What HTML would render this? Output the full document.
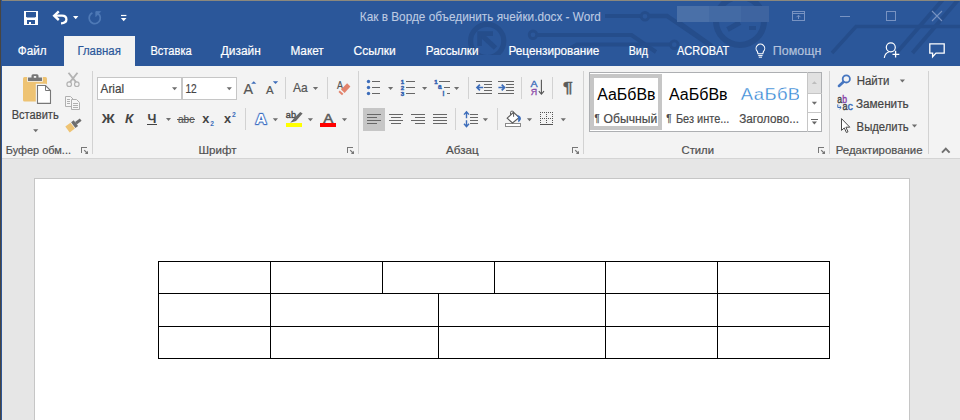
<!DOCTYPE html>
<html><head><meta charset="utf-8">
<style>
*{box-sizing:border-box;margin:0;padding:0}
html,body{width:960px;height:420px;overflow:hidden;background:#e6e6e6}
body{font-family:"Liberation Sans",sans-serif;position:relative}
.abs{position:absolute}
#title{left:0;top:0;width:960px;height:66px;background:#2b579a}
#hometab{left:64px;top:36px;width:71px;height:31px;background:#f3f3f3}
#ribbon{left:0;top:66px;width:960px;height:93px;background:#f3f3f3;border-bottom:1px solid #d4d4d4}
#page{left:34px;top:178px;width:876px;height:260px;background:#fff;border:1px solid #c6c6c6}
svg{position:absolute;left:0;top:0}
svg text{font-family:"Liberation Sans",sans-serif;white-space:pre}
</style></head><body>
<div class="abs" id="title"></div>
<div class="abs" id="hometab"></div>
<div class="abs" id="ribbon"></div>
<div class="abs" id="page"></div>
<svg width="960" height="420" viewBox="0 0 960 420">
<clipPath id="cp"><rect x="0" y="1" width="960" height="54"/></clipPath>
<g fill="none" stroke="#254d8b" stroke-width="3.4" clip-path="url(#cp)">
<circle cx="487.2" cy="41" r="16.6" stroke-width="5.2"/>
<path d="M481.5 35.2 L495.5 48" fill="none" stroke="#254d8b" stroke-width="5" />
<path d="M479.6 46 V33.6 H493" fill="none" stroke="#254d8b" stroke-width="4.6" />
<circle cx="533" cy="34.8" r="3.8" stroke-width="2.8"/>
<path d="M537 35 H631.5 L656 52" fill="none" stroke="#254d8b" stroke-width="4" />
<path d="M564 52 L577 44.6 H670.4" fill="none" stroke="#254d8b" stroke-width="4" />
<circle cx="674.3" cy="44.7" r="3.8" stroke-width="2.8"/>
<path d="M605 16 H641" fill="none" stroke="#254d8b" stroke-width="4" />
<circle cx="645" cy="16.3" r="3.8" stroke-width="2.8"/>
<path d="M649 16 H667 L708 44" fill="none" stroke="#254d8b" stroke-width="4.4" />
<path d="M677 21 L712 46" fill="none" stroke="#254d8b" stroke-width="4" />
<circle cx="740" cy="21" r="24" stroke-width="6"/>
<path d="M727.5 29.5 L740 22.5" fill="none" stroke="#254d8b" stroke-width="5" />
<path d="M749 28 h7" fill="none" stroke="#254d8b" stroke-width="4" />
<path d="M832 53 L856 26.5 H960" fill="none" stroke="#254d8b" stroke-width="3.6" />
<path d="M896.5 53 L942.5 0" fill="none" stroke="#254d8b" stroke-width="4" />
<path d="M912.5 53 L958 0" fill="none" stroke="#254d8b" stroke-width="4" />
</g>
<g shape-rendering="crispEdges">
<rect x="0" y="0" width="1" height="420" fill="#474542" />
<rect x="1" y="0" width="1" height="420" fill="#2c5596" />
<rect x="2" y="0" width="958" height="1" fill="#8b887d" />
</g>
<g shape-rendering="crispEdges">
<rect x="24" y="11" width="14" height="14" fill="#fff" />
<path d="M26 12h10v4.5l-1 1h-8l-1 -1z" fill="#2b579a" stroke="none" stroke-width="1" shape-rendering="geometricPrecision"/>
<rect x="27" y="20" width="8" height="4" fill="#2b579a" />
<rect x="29" y="22" width="2" height="2" fill="#fff" />
</g>
<path d="M58.8 11.4 L54.2 15.7 L58.8 20" fill="none" stroke="#fff" stroke-width="2.4" stroke-linejoin="miter"/>
<path d="M55 15.7 H62 C65.2 15.7 66.4 17.8 66.4 19.6 C66.4 22 64.2 23.2 61 23.4" fill="none" stroke="#fff" stroke-width="2.3" />
<path d="M73 16h5.4l-2.7 3.2z" fill="#fff" stroke="none" stroke-width="1" />
<path d="M92.4 12.9 A5.6 5.6 0 1 0 99.7 15.4 L96.2 12" fill="none" stroke="#4e79b6" stroke-width="1.8" />
<path d="M95.8 16.6 V11.6 H100.6 Z" fill="#4e79b6" stroke="#4e79b6" stroke-width="0.8" />
<rect x="121" y="14.9" width="5.4" height="1.2" fill="#fff" />
<path d="M120.9 18h5.6l-2.8 3.2z" fill="#fff" stroke="none" stroke-width="1" />
<text x="359.8" y="21.3" font-size="12.1" fill="#becbe2" textLength="241.0" lengthAdjust="spacingAndGlyphs" stroke="#becbe2" stroke-width="0.1" >Как в Ворде объединить ячейки.docx - Word</text>
<g shape-rendering="crispEdges">
<rect x="677" y="6" width="32" height="16" fill="#4a70a8" />
<rect x="709" y="6" width="32" height="16" fill="#436aa4" />
<rect x="741" y="6" width="28" height="16" fill="#3e64a0" />
</g>
<g shape-rendering="crispEdges" fill="none" stroke="#7893c2">
<rect x="792.5" y="11.5" width="12" height="9"/>
<line x1="793" y1="13.5" x2="804" y2="13.5"/>
</g>
<path d="M798.5 19 V15.5 M796.5 17.2 L798.5 15.2 L800.5 17.2" fill="none" stroke="#7893c2" stroke-width="1" />
<g shape-rendering="crispEdges">
<rect x="840" y="16" width="10" height="1" fill="#7893c2" />
<rect x="886.5" y="11.5" width="9" height="9" fill="none" stroke="#7893c2"/>
</g>
<path d="M932 11 L942 21 M942 11 L932 21" fill="none" stroke="#7893c2" stroke-width="1.1" />
<text x="17.8" y="55" font-size="12.5" fill="#fff" textLength="28.8" lengthAdjust="spacingAndGlyphs" stroke="#fff" stroke-width="0.2" >Файл</text>
<text x="77.4" y="55" font-size="12.5" fill="#2b579a" textLength="43.5" lengthAdjust="spacingAndGlyphs" stroke="#2b579a" stroke-width="0.2" >Главная</text>
<text x="150.4" y="55" font-size="12.5" fill="#fff" textLength="41.3" lengthAdjust="spacingAndGlyphs" stroke="#fff" stroke-width="0.2" >Вставка</text>
<text x="220.8" y="55" font-size="12.5" fill="#fff" textLength="40.0" lengthAdjust="spacingAndGlyphs" stroke="#fff" stroke-width="0.2" >Дизайн</text>
<text x="290.4" y="55" font-size="12.5" fill="#fff" textLength="33.4" lengthAdjust="spacingAndGlyphs" stroke="#fff" stroke-width="0.2" >Макет</text>
<text x="353.5" y="55" font-size="12.5" fill="#fff" textLength="42.3" lengthAdjust="spacingAndGlyphs" stroke="#fff" stroke-width="0.2" >Ссылки</text>
<text x="425.8" y="55" font-size="12.5" fill="#fff" textLength="52.7" lengthAdjust="spacingAndGlyphs" stroke="#fff" stroke-width="0.2" >Рассылки</text>
<text x="508.5" y="55" font-size="12.5" fill="#fff" textLength="90.8" lengthAdjust="spacingAndGlyphs" stroke="#fff" stroke-width="0.2" >Рецензирование</text>
<text x="628.7" y="55" font-size="12.5" fill="#fff" textLength="19.3" lengthAdjust="spacingAndGlyphs" stroke="#fff" stroke-width="0.2" >Вид</text>
<text x="677" y="55" font-size="12.5" fill="#fff" textLength="52.3" lengthAdjust="spacingAndGlyphs" stroke="#fff" stroke-width="0.2" >ACROBAT</text>
<text x="772.8" y="55" font-size="12.5" fill="#b4c2dc" textLength="48.5" lengthAdjust="spacingAndGlyphs" stroke="#b4c2dc" stroke-width="0.2" >Помощн</text>
<path d="M757.3 51.4 A4.3 4.3 0 1 1 763.5 51.4 L762.8 53.8 H758 Z" fill="none" stroke="#fff" stroke-width="1.1" />
<path d="M758.2 55.6 H762.6 M758.8 57.2 H762" fill="none" stroke="#fff" stroke-width="1" />
<circle cx="890.8" cy="47.3" r="4.5" fill="none" stroke="#fff" stroke-width="1.2"/>
<path d="M884.3 57.8 C884.8 54.4 886.6 52.6 889.2 51.8" fill="none" stroke="#fff" stroke-width="1.2" />
<path d="M892.5 54.3 H899.3 M895.6 50.8 V57.6" fill="none" stroke="#fff" stroke-width="1.3" />
<path d="M929.8 43.9 H944.2 V53.1 H936 L932.6 56.8 V53.1 H929.8 Z" fill="none" stroke="#fff" stroke-width="1.3" />
<g shape-rendering="crispEdges">
<rect x="92" y="71" width="1" height="83" fill="#d2d2d2" />
<rect x="358" y="71" width="1" height="83" fill="#d2d2d2" />
<rect x="583" y="71" width="1" height="83" fill="#d2d2d2" />
<rect x="829" y="71" width="1" height="83" fill="#d2d2d2" />
<rect x="928" y="71" width="1" height="83" fill="#d2d2d2" />
<rect x="285" y="77" width="1" height="22" fill="#d2d2d2" />
<rect x="327" y="77" width="1" height="22" fill="#d2d2d2" />
<rect x="468" y="77" width="1" height="22" fill="#d2d2d2" />
<rect x="521" y="77" width="1" height="22" fill="#d2d2d2" />
<rect x="552" y="77" width="1" height="22" fill="#d2d2d2" />
<rect x="245" y="108" width="1" height="22" fill="#d2d2d2" />
<rect x="455" y="108" width="1" height="22" fill="#d2d2d2" />
<rect x="497" y="108" width="1" height="22" fill="#d2d2d2" />
</g>
<g shape-rendering="crispEdges" fill="#777">
<rect x="81" y="147" width="6" height="1" fill="#777" />
<rect x="81" y="147" width="1" height="6" fill="#777" />
</g>
<path d="M84.2 150.2 L87 153" fill="none" stroke="#777" stroke-width="1.2" />
<path d="M88 150.8 V154 H84.8 Z" fill="#777" stroke="none" stroke-width="1" />
<g shape-rendering="crispEdges" fill="#777">
<rect x="347" y="147" width="6" height="1" fill="#777" />
<rect x="347" y="147" width="1" height="6" fill="#777" />
</g>
<path d="M350.2 150.2 L353 153" fill="none" stroke="#777" stroke-width="1.2" />
<path d="M354 150.8 V154 H350.8 Z" fill="#777" stroke="none" stroke-width="1" />
<g shape-rendering="crispEdges" fill="#777">
<rect x="572" y="147" width="6" height="1" fill="#777" />
<rect x="572" y="147" width="1" height="6" fill="#777" />
</g>
<path d="M575.2 150.2 L578 153" fill="none" stroke="#777" stroke-width="1.2" />
<path d="M579 150.8 V154 H575.8 Z" fill="#777" stroke="none" stroke-width="1" />
<g shape-rendering="crispEdges" fill="#777">
<rect x="818" y="147" width="6" height="1" fill="#777" />
<rect x="818" y="147" width="1" height="6" fill="#777" />
</g>
<path d="M821.2 150.2 L824 153" fill="none" stroke="#777" stroke-width="1.2" />
<path d="M825 150.8 V154 H821.8 Z" fill="#777" stroke="none" stroke-width="1" />
<text x="5.7" y="154" font-size="11.3" fill="#505050" textLength="65.3" lengthAdjust="spacingAndGlyphs" stroke="#505050" stroke-width="0.2" >Буфер обм...</text>
<text x="198.5" y="154" font-size="11.3" fill="#505050" textLength="38.0" lengthAdjust="spacingAndGlyphs" stroke="#505050" stroke-width="0.2" >Шрифт</text>
<text x="446" y="154" font-size="11.3" fill="#505050" textLength="32.6" lengthAdjust="spacingAndGlyphs" stroke="#505050" stroke-width="0.2" >Абзац</text>
<text x="681.5" y="154" font-size="11.3" fill="#505050" textLength="32.5" lengthAdjust="spacingAndGlyphs" stroke="#505050" stroke-width="0.2" >Стили</text>
<text x="835.7" y="154" font-size="11.3" fill="#505050" textLength="86.9" lengthAdjust="spacingAndGlyphs" stroke="#505050" stroke-width="0.2" >Редактирование</text>
<path d="M942 152.6 L945.8 148.6 L949.6 152.6" fill="none" stroke="#707070" stroke-width="2" />
<path d="M24.5 77 H45.5 Q47 77 47 78.5 V100 Q47 101.6 45.5 101.6 H24.5 Q23 101.6 23 100 V78.5 Q23 77 24.5 77Z" fill="#eec373" stroke="none" stroke-width="1" />
<path d="M28 81 V77.6 H31.5 V75.8 Q31.5 74.2 33 74.2 H37 Q38.5 74.2 38.5 75.8 V77.6 H42 V81 Z" fill="#777" stroke="#f3f3f3" stroke-width="1.6" paint-order="stroke"/>
<rect x="33.8" y="76" width="2.4" height="1.8" fill="#f3f3f3" />
<path d="M37.5 85.5 H45.5 L50.5 90.5 V103.4 H37.5 Z" fill="none" stroke="#f3f3f3" stroke-width="3.4" />
<path d="M37.5 85.5 H45.5 L50.5 90.5 V103.4 H37.5 Z" fill="#fff" stroke="#777" stroke-width="1.1" />
<path d="M45.5 85.5 V90.5 H50.5" fill="none" stroke="#777" stroke-width="1" />
<text x="11.7" y="118.9" font-size="12.5" fill="#444" textLength="47.0" lengthAdjust="spacingAndGlyphs" stroke="#444" stroke-width="0.2" >Вставить</text>
<path d="M33.1 129.2h5.2l-2.6 3z" fill="#6e6e6e" stroke="none" stroke-width="1" />
<path d="M68.5 72.8 L76.2 82.4 M77.5 72.8 L69.8 82.4" fill="none" stroke="#b3b3b3" stroke-width="1.8" />
<circle cx="69.2" cy="84.2" r="2.3" fill="none" stroke="#b3b3b3" stroke-width="1.2"/>
<circle cx="76.8" cy="84.2" r="2.3" fill="none" stroke="#b3b3b3" stroke-width="1.2"/>
<path d="M65.5 96.5 H70.5 L73 99 V106.5 H65.5 Z" fill="#f6f6f6" stroke="#b0b0b0" stroke-width="1" />
<path d="M71.5 99.5 H76.5 L79.5 102.5 V109.5 H71.5 Z" fill="#f6f6f6" stroke="#b0b0b0" stroke-width="1" />
<g shape-rendering="crispEdges" fill="#b0b0b0">
<rect x="67" y="99" width="3" height="1" fill="#b0b0b0" />
<rect x="67" y="101" width="3" height="1" fill="#b0b0b0" />
<rect x="67" y="103" width="3" height="1" fill="#b0b0b0" />
<rect x="73" y="103" width="5" height="1" fill="#b0b0b0" />
<rect x="73" y="105" width="5" height="1" fill="#b0b0b0" />
<rect x="73" y="107" width="5" height="1" fill="#b0b0b0" />
</g>
<path d="M65.3 126.6 L70.5 122.7 L74.9 128.5 L69.7 132.4 Z" fill="#eec373" stroke="none" stroke-width="1" />
<path d="M71.1 122.3 L73.7 120.3 L78.1 126.1 L75.4 128.1 Z" fill="#6e6e6e" stroke="none" stroke-width="1" />
<path d="M75 122 L79.8 118.4 L81.6 120.8 L76.8 124.4 Z" fill="#6e6e6e" stroke="none" stroke-width="1" />
<g shape-rendering="crispEdges">
<rect x="97.5" y="77.5" width="84" height="22" fill="#fff" stroke="#c6c6c6"/>
<rect x="182.5" y="77.5" width="54" height="22" fill="#fff" stroke="#c6c6c6"/>
</g>
<text x="100.6" y="93" font-size="12.6" fill="#444" textLength="23.4" lengthAdjust="spacingAndGlyphs" stroke="#444" stroke-width="0.2" >Arial</text>
<path d="M172 87.3h5.2l-2.6 3z" fill="#6e6e6e" stroke="none" stroke-width="1" />
<text x="185.4" y="93" font-size="12.6" fill="#444" textLength="11.3" lengthAdjust="spacingAndGlyphs" stroke="#444" stroke-width="0.2" >12</text>
<path d="M226.7 87.3h5.2l-2.6 3z" fill="#6e6e6e" stroke="none" stroke-width="1" />
<text x="101.7" y="123" font-size="12.4" fill="#444" textLength="13.0" lengthAdjust="spacingAndGlyphs" font-weight="bold" >Ж</text>
<text x="125.1" y="123" font-size="12.4" fill="#444" textLength="8.3" lengthAdjust="spacingAndGlyphs" font-weight="bold" font-style="italic" >К</text>
<text x="147.5" y="123" font-size="12.4" fill="#444" textLength="8.9" lengthAdjust="spacingAndGlyphs" font-weight="bold" >Ч</text>
<g shape-rendering="crispEdges">
<rect x="147" y="124" width="10" height="1" fill="#444" />
</g>
<path d="M166 118h5l-2.5 3z" fill="#6e6e6e" stroke="none" stroke-width="1" />
<text x="178" y="123" font-size="11.5" fill="#555" textLength="16.3" lengthAdjust="spacingAndGlyphs" stroke="#555" stroke-width="0.2" >abc</text>
<g shape-rendering="crispEdges">
<rect x="177" y="119" width="18" height="1" fill="#555" />
</g>
<text x="202.2" y="123" font-size="13.5" fill="#444" textLength="7.1" lengthAdjust="spacingAndGlyphs" font-weight="bold" >x</text>
<text x="210.2" y="125.5" font-size="6.5" fill="#3d6dba" textLength="3.7" lengthAdjust="spacingAndGlyphs" font-weight="bold" >2</text>
<text x="224" y="123" font-size="13.5" fill="#444" textLength="7.1" lengthAdjust="spacingAndGlyphs" font-weight="bold" >x</text>
<text x="232" y="117" font-size="6.5" fill="#3d6dba" textLength="3.8" lengthAdjust="spacingAndGlyphs" font-weight="bold" >2</text>
<text x="243.4" y="94.1" font-size="14" fill="#555" textLength="9.5" lengthAdjust="spacingAndGlyphs" stroke="#555" stroke-width="0.2" >A</text>
<path d="M251.2 83.8 L253.75 81.2 L256.3 83.8 Z" fill="#3d6dba" stroke="none" stroke-width="1" />
<text x="266" y="94.1" font-size="11.3" fill="#555" textLength="7.6" lengthAdjust="spacingAndGlyphs" stroke="#555" stroke-width="0.2" >A</text>
<path d="M272.8 81.2 H278.2 L275.5 83.9 Z" fill="#3d6dba" stroke="none" stroke-width="1" />
<text x="293.1" y="91.7" font-size="12.2" fill="#555" textLength="14.7" lengthAdjust="spacingAndGlyphs" stroke="#555" stroke-width="0.2" >Aa</text>
<path d="M312.9 87h5.2l-2.6 3z" fill="#6e6e6e" stroke="none" stroke-width="1" />
<text x="336.9" y="88.9" font-size="11" fill="#555" textLength="6.0" lengthAdjust="spacingAndGlyphs" stroke="#555" stroke-width="0.2" >A</text>
<path d="M347.1 83.3 L350.4 86.6 L344.6 93 L341 89.4 Z" fill="#e2836c" stroke="none" stroke-width="1" />
<path d="M339.7 90.5 L343.4 93.8 L342 95.2 L338.5 92 Z" fill="#e2836c" stroke="none" stroke-width="1" />
<text x="255.4" y="123.6" font-size="15" fill="none" textLength="11.1" lengthAdjust="spacingAndGlyphs" stroke="#c3d3ef" stroke-width="3.2" font-weight="bold" stroke-linejoin="round">A</text>
<text x="255.4" y="123.6" font-size="15" fill="#fff" textLength="11.1" lengthAdjust="spacingAndGlyphs" stroke="#3f6fbe" stroke-width="1.8" paint-order="stroke" font-weight="bold" stroke-linejoin="round">A</text>
<path d="M272.8 118.3h5.2l-2.6 3z" fill="#6e6e6e" stroke="none" stroke-width="1" />
<text x="285.8" y="118" font-size="9.6" fill="#444" textLength="10.2" lengthAdjust="spacingAndGlyphs" stroke="#444" stroke-width="0.35">ab</text>
<path d="M300.2 112 L302.6 113.6 L296 121 L290.2 122.8 L293.4 119 Z" fill="#666" stroke="none" stroke-width="1" />
<g shape-rendering="crispEdges">
<rect x="286" y="123" width="16" height="4" fill="#ffff00" />
</g>
<path d="M307.8 118.3h5.2l-2.6 3z" fill="#6e6e6e" stroke="none" stroke-width="1" />
<text x="323.3" y="122.7" font-size="13.2" fill="#5a5a5a" textLength="10.0" lengthAdjust="spacingAndGlyphs" stroke="#5a5a5a" stroke-width="0.5">A</text>
<g shape-rendering="crispEdges">
<rect x="320" y="123" width="16" height="4" fill="#ff0000" />
</g>
<path d="M341.9 118.3h5.2l-2.6 3z" fill="#6e6e6e" stroke="none" stroke-width="1" />
<g shape-rendering="crispEdges">
<rect x="372" y="81" width="8" height="1" fill="#666" />
<rect x="372" y="87" width="8" height="1" fill="#666" />
<rect x="372" y="93" width="8" height="1" fill="#666" />
<rect x="406" y="81" width="9" height="1" fill="#666" />
<rect x="406" y="87" width="9" height="1" fill="#666" />
<rect x="406" y="93" width="9" height="1" fill="#666" />
<rect x="439" y="81" width="11" height="1" fill="#666" />
<rect x="444" y="87" width="6" height="1" fill="#666" />
<rect x="447" y="93" width="3" height="1" fill="#666" />
<rect x="476" y="81" width="16" height="1" fill="#666" />
<rect x="476" y="93" width="16" height="1" fill="#666" />
<rect x="484" y="84" width="8" height="1" fill="#666" />
<rect x="484" y="87" width="8" height="1" fill="#666" />
<rect x="484" y="90" width="8" height="1" fill="#666" />
<rect x="498" y="81" width="16" height="1" fill="#666" />
<rect x="498" y="93" width="16" height="1" fill="#666" />
<rect x="506" y="84" width="8" height="1" fill="#666" />
<rect x="506" y="87" width="8" height="1" fill="#666" />
<rect x="506" y="90" width="8" height="1" fill="#666" />
<rect x="363" y="108" width="22" height="23" fill="#c6c6c6" />
<rect x="367" y="114" width="14" height="1" fill="#666" />
<rect x="389" y="114" width="14" height="1" fill="#666" />
<rect x="411" y="114" width="14" height="1" fill="#666" />
<rect x="433" y="114" width="14" height="1" fill="#666" />
<rect x="470" y="114" width="8" height="1" fill="#666" />
<rect x="367" y="117" width="10" height="1" fill="#666" />
<rect x="391" y="117" width="10" height="1" fill="#666" />
<rect x="415" y="117" width="10" height="1" fill="#666" />
<rect x="433" y="117" width="14" height="1" fill="#666" />
<rect x="470" y="117" width="8" height="1" fill="#666" />
<rect x="367" y="120" width="14" height="1" fill="#666" />
<rect x="389" y="120" width="14" height="1" fill="#666" />
<rect x="411" y="120" width="14" height="1" fill="#666" />
<rect x="433" y="120" width="14" height="1" fill="#666" />
<rect x="470" y="120" width="8" height="1" fill="#666" />
<rect x="367" y="123" width="10" height="1" fill="#666" />
<rect x="391" y="123" width="10" height="1" fill="#666" />
<rect x="415" y="123" width="10" height="1" fill="#666" />
<rect x="433" y="123" width="14" height="1" fill="#666" />
<rect x="470" y="123" width="8" height="1" fill="#666" />
</g>
<circle cx="368.5" cy="81.5" r="1.7" fill="#3d6dba"/>
<circle cx="368.5" cy="87.5" r="1.7" fill="#3d6dba"/>
<circle cx="368.5" cy="93.5" r="1.7" fill="#3d6dba"/>
<path d="M388 87h5.2l-2.6 3z" fill="#6e6e6e" stroke="none" stroke-width="1" />
<path d="M422 87h5.2l-2.6 3z" fill="#6e6e6e" stroke="none" stroke-width="1" />
<path d="M454 87h5.2l-2.6 3z" fill="#6e6e6e" stroke="none" stroke-width="1" />
<text x="400.8" y="83.9" font-size="6" fill="#3262b0" textLength="3.4" lengthAdjust="spacingAndGlyphs" font-weight="bold" stroke="#3262b0" stroke-width="0.45">1</text>
<text x="400.8" y="89.9" font-size="6" fill="#3262b0" textLength="3.4" lengthAdjust="spacingAndGlyphs" font-weight="bold" stroke="#3262b0" stroke-width="0.45">2</text>
<text x="400.8" y="95.9" font-size="6" fill="#3262b0" textLength="3.4" lengthAdjust="spacingAndGlyphs" font-weight="bold" stroke="#3262b0" stroke-width="0.45">3</text>
<text x="434.2" y="83.9" font-size="6" fill="#3262b0" textLength="3.4" lengthAdjust="spacingAndGlyphs" font-weight="bold" stroke="#3262b0" stroke-width="0.45">1</text>
<text x="438" y="89.2" font-size="6.6" fill="#3262b0" textLength="3.6" lengthAdjust="spacingAndGlyphs" font-weight="bold" stroke="#3262b0" stroke-width="0.4">a</text>
<text x="442.6" y="95.8" font-size="6.6" fill="#3262b0" font-weight="bold" stroke="#3262b0" stroke-width="0.3">i</text>
<path d="M483.2 87.5 H477.2 M479.9 84.6 L477 87.5 L479.9 90.4" fill="none" stroke="#3d6dba" stroke-width="1.7" />
<path d="M498.4 87.5 H504.4 M501.7 84.6 L504.6 87.5 L501.7 90.4" fill="none" stroke="#3d6dba" stroke-width="1.7" />
<text x="530.6" y="86.7" font-size="9.6" fill="#3d6dba" textLength="7.1" lengthAdjust="spacingAndGlyphs" stroke="#3d6dba" stroke-width="0.35" >A</text>
<text x="530.8" y="94.9" font-size="9.6" fill="#8a4aa8" textLength="6.4" lengthAdjust="spacingAndGlyphs" stroke="#8a4aa8" stroke-width="0.35" >Я</text>
<path d="M541.4 79.8 V94 M538.8 91.2 L541.4 94.2 L544 91.2" fill="none" stroke="#555" stroke-width="1.1" />
<text x="563" y="92.2" font-size="15.5" fill="#5a5a5a" textLength="9.8" lengthAdjust="spacingAndGlyphs" stroke="#5a5a5a" stroke-width="0.5" >¶</text>
<path d="M466.5 112 V118.2 M466.5 120.2 V126.4 M464 114.6 L466.5 111.8 L469 114.6 M464 123.8 L466.5 126.6 L469 123.8" fill="none" stroke="#3d6dba" stroke-width="1.4" />
<path d="M482.8 118.2h5.2l-2.6 3z" fill="#6e6e6e" stroke="none" stroke-width="1" />
<g shape-rendering="crispEdges">
<rect x="505.5" y="123.5" width="15" height="3" fill="#fff" stroke="#8a8a8a"/>
</g>
<path d="M507.2 118.2 L513.5 112.3 L519.2 117.5 L512.5 123 Z" fill="#fff" stroke="#5a5a5a" stroke-width="1.1" />
<path d="M510.5 114.8 V112.4 Q510.5 111.2 511.8 111.2 H512.4 Q513.6 111.2 513.6 112.4 V116.8" fill="none" stroke="#5a5a5a" stroke-width="1" />
<path d="M517.2 114.8 Q521.8 116.6 520.8 119.6 Q520 121.6 518.2 122.2 Q518.8 118.4 517.2 114.8Z" fill="#3d6dba" stroke="none" stroke-width="1" />
<path d="M526.9 118.2h5.2l-2.6 3z" fill="#6e6e6e" stroke="none" stroke-width="1" />
<g shape-rendering="crispEdges">
<rect x="540" y="112" width="1" height="1" fill="#555" />
<rect x="540" y="118" width="1" height="1" fill="#555" />
<rect x="542" y="112" width="1" height="1" fill="#555" />
<rect x="542" y="118" width="1" height="1" fill="#555" />
<rect x="544" y="112" width="1" height="1" fill="#555" />
<rect x="544" y="118" width="1" height="1" fill="#555" />
<rect x="546" y="112" width="1" height="1" fill="#555" />
<rect x="546" y="118" width="1" height="1" fill="#555" />
<rect x="548" y="112" width="1" height="1" fill="#555" />
<rect x="548" y="118" width="1" height="1" fill="#555" />
<rect x="550" y="112" width="1" height="1" fill="#555" />
<rect x="550" y="118" width="1" height="1" fill="#555" />
<rect x="552" y="112" width="1" height="1" fill="#555" />
<rect x="552" y="118" width="1" height="1" fill="#555" />
<rect x="540" y="112" width="1" height="1" fill="#555" />
<rect x="546" y="112" width="1" height="1" fill="#555" />
<rect x="552" y="112" width="1" height="1" fill="#555" />
<rect x="540" y="114" width="1" height="1" fill="#555" />
<rect x="546" y="114" width="1" height="1" fill="#555" />
<rect x="552" y="114" width="1" height="1" fill="#555" />
<rect x="540" y="116" width="1" height="1" fill="#555" />
<rect x="546" y="116" width="1" height="1" fill="#555" />
<rect x="552" y="116" width="1" height="1" fill="#555" />
<rect x="540" y="118" width="1" height="1" fill="#555" />
<rect x="546" y="118" width="1" height="1" fill="#555" />
<rect x="552" y="118" width="1" height="1" fill="#555" />
<rect x="540" y="120" width="1" height="1" fill="#555" />
<rect x="546" y="120" width="1" height="1" fill="#555" />
<rect x="552" y="120" width="1" height="1" fill="#555" />
<rect x="540" y="122" width="1" height="1" fill="#555" />
<rect x="546" y="122" width="1" height="1" fill="#555" />
<rect x="552" y="122" width="1" height="1" fill="#555" />
<rect x="540" y="124" width="13" height="1" fill="#555" />
</g>
<path d="M560.7 118.2h5.2l-2.6 3z" fill="#6e6e6e" stroke="none" stroke-width="1" />
<g shape-rendering="crispEdges">
<rect x="589.5" y="72.5" width="232" height="59" fill="#fff" stroke="#adafb2"/>
<rect x="807" y="73" width="14" height="20" fill="#e1e1e1" />
<rect x="807" y="72" width="1" height="60" fill="#c6c6c6" />
<rect x="807" y="93" width="15" height="1" fill="#c6c6c6" />
<rect x="807" y="112" width="15" height="1" fill="#c6c6c6" />
<rect x="592" y="76" width="68" height="52" fill="none" stroke="#c6c6c6" stroke-width="4"/>
</g>
<text x="597.2" y="100" font-size="16" fill="#000" textLength="58.3" lengthAdjust="spacingAndGlyphs" >АаБбВв</text>
<text x="668.9" y="100" font-size="16" fill="#000" textLength="58.7" lengthAdjust="spacingAndGlyphs" >АаБбВв</text>
<clipPath id="c3"><rect x="735" y="72" width="64.2" height="60"/></clipPath>
<text x="740.8" y="100.4" font-size="17.3" fill="#2f84d4" textLength="70.0" lengthAdjust="spacingAndGlyphs" clip-path="url(#c3)" stroke="#fff" stroke-width="0.3" letter-spacing="0.4">АаБбВв</text>
<text x="594.4" y="121.5" font-size="10.8" fill="#4a4a4a" textLength="5.2" lengthAdjust="spacingAndGlyphs" stroke="#4a4a4a" stroke-width="0.2" >¶</text>
<text x="603.6" y="122.9" font-size="12.5" fill="#4a4a4a" textLength="53.6" lengthAdjust="spacingAndGlyphs" stroke="#4a4a4a" stroke-width="0.2" >Обычный</text>
<text x="666.2" y="121.5" font-size="10.8" fill="#4a4a4a" textLength="5.3" lengthAdjust="spacingAndGlyphs" stroke="#4a4a4a" stroke-width="0.2" >¶</text>
<text x="675.9" y="122.9" font-size="12.5" fill="#4a4a4a" textLength="53.5" lengthAdjust="spacingAndGlyphs" stroke="#4a4a4a" stroke-width="0.2" >Без инте...</text>
<text x="739.2" y="122.9" font-size="12.5" fill="#4a4a4a" textLength="59.8" lengthAdjust="spacingAndGlyphs" stroke="#4a4a4a" stroke-width="0.2" >Заголово...</text>
<path d="M811.8 84 L814.4 81.2 L817 84 Z" fill="#bdbdbd" stroke="none" stroke-width="1" />
<path d="M811.8 101.8h5.2l-2.6 3z" fill="#6e6e6e" stroke="none" stroke-width="1" />
<g shape-rendering="crispEdges">
<rect x="811" y="119" width="7" height="1" fill="#666" />
</g>
<path d="M811.8 121.6h5.2l-2.6 3z" fill="#666" stroke="none" stroke-width="1" />
<circle cx="846.3" cy="78.9" r="3.6" fill="none" stroke="#4676c0" stroke-width="1.8"/>
<path d="M843.3 81.9 L839 85.9" fill="none" stroke="#4676c0" stroke-width="2.7" stroke-linecap="round"/>
<text x="856.7" y="84.9" font-size="12.5" fill="#444" textLength="32.7" lengthAdjust="spacingAndGlyphs" stroke="#444" stroke-width="0.2" >Найти</text>
<path d="M899.8 79.4h5.2l-2.6 3z" fill="#6e6e6e" stroke="none" stroke-width="1" />
<text x="837.2" y="103" font-size="10.5" fill="#444" textLength="4.8" lengthAdjust="spacingAndGlyphs" stroke="#444" stroke-width="0.4" >a</text>
<text x="842.2" y="103" font-size="10.5" fill="#8a3fa8" textLength="4.8" lengthAdjust="spacingAndGlyphs" stroke="#8a3fa8" stroke-width="0.4" >b</text>
<text x="842.4" y="109.8" font-size="10.5" fill="#444" textLength="5.0" lengthAdjust="spacingAndGlyphs" stroke="#444" stroke-width="0.4" >a</text>
<text x="847.6" y="109.8" font-size="10.5" fill="#3d6dba" textLength="5.4" lengthAdjust="spacingAndGlyphs" stroke="#3d6dba" stroke-width="0.4" >c</text>
<path d="M837.8 104.4 V107.5 H841 M839.6 106 L841.2 107.5 L839.6 109" fill="none" stroke="#3d6dba" stroke-width="1" />
<text x="855.9" y="107.9" font-size="12.5" fill="#444" textLength="52.8" lengthAdjust="spacingAndGlyphs" stroke="#444" stroke-width="0.2" >Заменить</text>
<path d="M841.5 118.6 V130.4 L844.3 127.9 L846.4 132.5 L848 131.8 L845.9 127.2 H849.8 Z" fill="#fff" stroke="#4a4a4a" stroke-width="1" stroke-linejoin="round"/>
<text x="856.6" y="130.9" font-size="12.5" fill="#444" textLength="52.1" lengthAdjust="spacingAndGlyphs" stroke="#444" stroke-width="0.2" >Выделить</text>
<path d="M911.9 124.6h5.2l-2.6 3z" fill="#6e6e6e" stroke="none" stroke-width="1" />
<g shape-rendering="crispEdges" fill="#000">
<rect x="158" y="261" width="672" height="1" fill="#000" />
<rect x="158" y="293" width="672" height="1" fill="#000" />
<rect x="158" y="326" width="672" height="1" fill="#000" />
<rect x="158" y="358" width="672" height="1" fill="#000" />
<rect x="158" y="261" width="1" height="98" fill="#000" />
<rect x="270" y="261" width="1" height="98" fill="#000" />
<rect x="605" y="261" width="1" height="98" fill="#000" />
<rect x="717" y="261" width="1" height="98" fill="#000" />
<rect x="829" y="261" width="1" height="98" fill="#000" />
<rect x="382" y="261" width="1" height="33" fill="#000" />
<rect x="494" y="261" width="1" height="33" fill="#000" />
<rect x="438" y="293" width="1" height="66" fill="#000" />
</g>
</svg>
</body></html>
